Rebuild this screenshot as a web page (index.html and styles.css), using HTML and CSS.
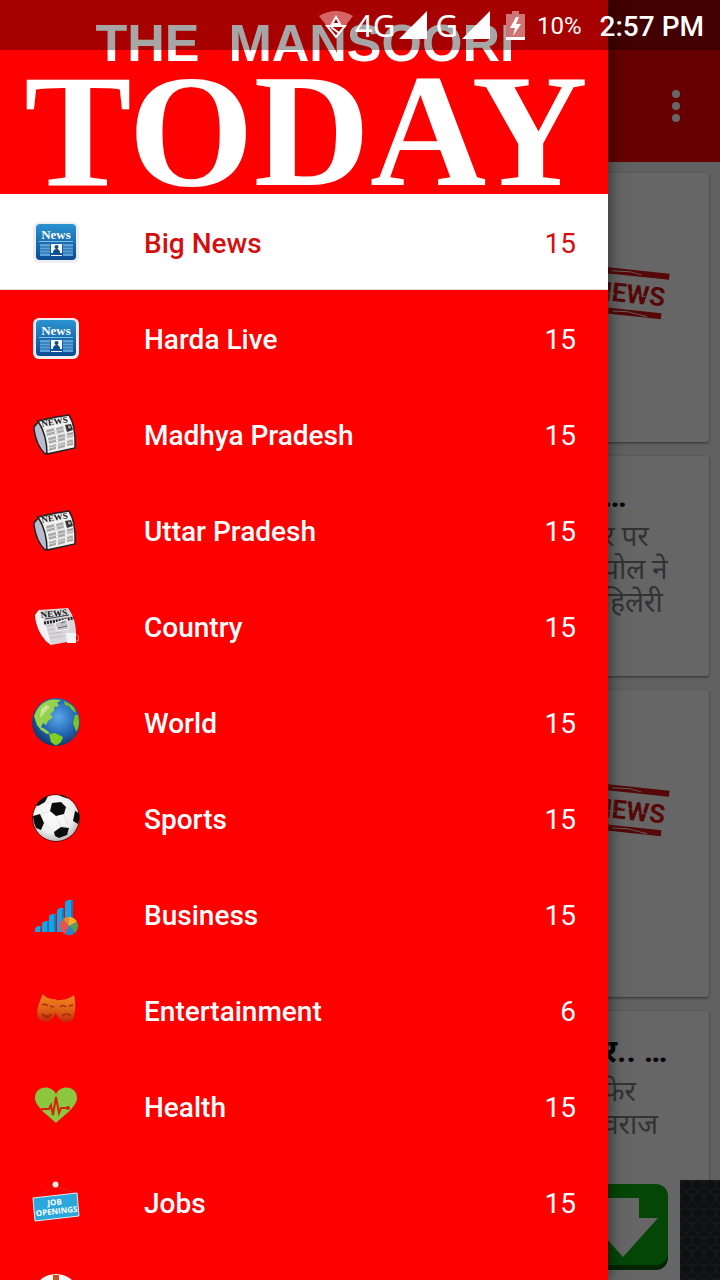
FILE: index.html
```html
<!DOCTYPE html>
<html lang="en">
<head>
<meta charset="utf-8">
<meta name="viewport" content="width=device-width, initial-scale=1">
<title>The Mansoori Today</title>
<link rel="stylesheet" href="styles.css">
</head>
<body>
<svg class="defs" aria-hidden="true">
  <defs>
    <linearGradient id="blue" x1="0" y1="0" x2="0" y2="1"><stop offset="0" stop-color="#2a93d0"/><stop offset="1" stop-color="#0b4a94"/></linearGradient>
    <radialGradient id="sea" cx=".55" cy=".4" r=".6"><stop offset="0" stop-color="#5aa8e8"/><stop offset=".6" stop-color="#2467b4"/><stop offset="1" stop-color="#12396f"/></radialGradient>
    <radialGradient id="ballshade" cx=".45" cy=".4" r=".6"><stop offset="0" stop-color="#fff"/><stop offset=".7" stop-color="#eee"/><stop offset="1" stop-color="#bbb"/></radialGradient>
    <linearGradient id="mask" x1="0" y1="0" x2="0" y2="1"><stop offset="0" stop-color="#f08a1c"/><stop offset=".6" stop-color="#dc5d16"/><stop offset="1" stop-color="#c4260c"/></linearGradient>
    <clipPath id="globeclip"><circle cx="24" cy="24" r="23"/></clipPath>
    <pattern id="hex" width="12" height="14" patternUnits="userSpaceOnUse"><path d="M6 0L11 3V7L6 10L1 7V3Z M0 8L5 11V14H0Z M12 8L7 11V14H12Z" fill="#26282c"/></pattern>
    <symbol id="i-app" viewBox="0 0 48 48">
      <rect x="1" y="4" width="46" height="41" rx="6" fill="#eeeef2"/>
      <rect x="4" y="6" width="40" height="36" rx="4" fill="url(#blue)"/>
      <text x="24" y="21" text-anchor="middle" class="app-word">News</text>
      <path d="M7 23.500H41" stroke="#7fc0e8"/>
      <path d="M8 26H18V38H8ZM31 26H41V38H31Z" fill="#5ba3d6"/>
      <path d="M8 29H18M8 32H18M8 35H18M31 29H41M31 32H41M31 35H41" stroke="#2167a8"/>
      <path d="M19 26H30V35H19ZM19 37H30V38H19Z" fill="#fff"/>
      <circle cx="24.500" cy="29" r="2" fill="#114b86"/><path d="M21 35Q21 31 24.500 31Q28 31 28 35Z" fill="#114b86"/>
    </symbol>
    <symbol id="i-paper" viewBox="0 0 48 48">
      <path d="M7 11L2 17V19Q4 35 13 44L16 42L12 14Z" fill="#b9bcd0" stroke="#222" stroke-width="1.500"/>
      <path d="M6 11Q22 7 37 5Q44 16 43 38L15 44Q15 25 6 11Z" fill="#f1f1f1" stroke="#222" stroke-width="1.500"/>
      <text x="10" y="17" transform="rotate(-10 10 17)" class="paper-word">NEWS</text>
      <path d="M14 20L22 18L23 24L15 26ZM24 18L31 16L32 22L25 24ZM16 28L24 26L24 32L17 34ZM26 25L33 24L33 30L26 32ZM17 36L24 34V39L17 41ZM26 34L33 32V37L26 39ZM35 23L41 22V27L35 28ZM35 31L41 29V35L35 36Z" fill="#aaa"/>
      <path d="M14 23L32 19M16 31L41 25M17 38L41 32M16 26L33 22M17 34L41 29" stroke="#ddd"/>
      <path d="M33 15L39 14L41 20L35 22Z" fill="#333"/><circle cx="37.500" cy="17" r="1.500" fill="#aaa"/>
    </symbol>
  </defs>
</svg>

<div class="screen">
  <div class="app">
    <header class="toolbar">
      <button class="more" type="button" aria-label="More options"><span></span><span></span><span></span></button>
    </header>
    <main class="feed" lang="hi">
      <article class="card card-photo">
        <svg class="stamp" viewBox="0 0 170 54" role="img" aria-label="Big News">
          <g transform="rotate(6 85 27)"><path d="M2-2H168V4H2ZM2 38H164V44H2Z" fill="#d61414"/><path d="M110 1L128 0L140 2M115 41L130 40L150 43" stroke="#eee" fill="none"/>
          <text x="166" y="31" text-anchor="end" class="stamp-word">BIG NEWS</text><path d="M108 24H120M122 20H134M138 23H148M151 25H162" stroke="#fff" stroke-dasharray="3 2"/></g>
        </svg>
      </article>
      <article class="card card-story">
        <h2>…</h2>
        <p>र पर<br>पोल ने<br>हिलेरी</p>
      </article>
      <article class="card card-photo card-tall">
        <svg class="stamp" viewBox="0 0 170 54" role="img" aria-label="Big News">
          <g transform="rotate(6 85 27)"><path d="M2-2H168V4H2ZM2 38H164V44H2Z" fill="#d61414"/><path d="M110 1L128 0L140 2M115 41L130 40L150 43" stroke="#eee" fill="none"/>
          <text x="166" y="31" text-anchor="end" class="stamp-word">BIG NEWS</text><path d="M108 24H120M122 20H134M138 23H148M151 25H162" stroke="#fff" stroke-dasharray="3 2"/></g>
        </svg>
      </article>
      <article class="card card-story">
        <h2>र.. …</h2>
        <p>फेर<br>वराज</p>
      </article>
    </main>
    <aside class="ad">
      <button class="download" type="button" aria-label="Download">
        <svg viewBox="0 0 88 88"><rect y="2" width="88" height="84" rx="12" fill="#085c08"/><rect width="88" height="81" rx="12" fill="#0cb010"/><path d="M27 14H59V34H78L43 73L8 34H27Z" fill="#fff"/></svg>
      </button>
      <svg class="mesh" aria-hidden="true"><rect width="100%" height="100%" fill="#3a3b3e"/><rect width="100%" height="100%" fill="url(#hex)"/></svg>
    </aside>
  </div>

  <div class="scrim"></div>

  <div class="drawer">
    <header class="brand"><span class="brand-top">THE&nbsp; MANSOORI</span><span class="brand-main">TODAY</span></header>
    <nav aria-label="Categories">
      <a class="item active" href="#big-news"><svg class="icon"><use href="#i-app"/></svg><span class="label">Big News</span><span class="count">15</span></a>
      <a class="item" href="#harda-live"><svg class="icon"><use href="#i-app"/></svg><span class="label">Harda Live</span><span class="count">15</span></a>
      <a class="item" href="#madhya-pradesh"><svg class="icon"><use href="#i-paper"/></svg><span class="label">Madhya Pradesh</span><span class="count">15</span></a>
      <a class="item" href="#uttar-pradesh"><svg class="icon"><use href="#i-paper"/></svg><span class="label">Uttar Pradesh</span><span class="count">15</span></a>
      <a class="item" href="#country">
        <svg class="icon" viewBox="0 0 48 48"><path d="M7 8L3 13Q4 28 14 39L19 43L35 40V34L44 31Q44 17 36 6Q22 7 7 8Z" fill="#d9d6d9"/><path d="M7 8L3 13Q4 28 14 39L19 43Q15 24 7 8Z" fill="#f4f2f4"/><text x="9" y="16" transform="rotate(-6 9 16)" class="paper-word">NEWS</text><path d="M12 21L42 16" stroke="#222" stroke-width="3" stroke-dasharray="2 1"/><path d="M13 17L37 13" stroke="#444"/><path d="M23 21L35 17L37 27L25 29Z" fill="#c5c5c9" stroke="#f4f4f4"/><path d="M26 26L35 24M29 21L33 20" stroke="#667"/><path d="M15 24L21 23M16 28L22 27M17 32L30 30M18 36L31 34" stroke="#bbb"/><path d="M34 31H44V41H35Z" fill="#eef6f6"/><path d="M44 33Q48 33 46 39H44" fill="none" stroke="#d88"/></svg>
        <span class="label">Country</span><span class="count">15</span></a>
      <a class="item" href="#world">
        <svg class="icon" viewBox="0 0 48 48"><circle cx="24" cy="24" r="24" fill="url(#sea)"/><g clip-path="url(#globeclip)"><path d="M2 18Q6 5 18 1L29 2L25 5L27 8L22 9L22 13L18 16L21 19L16 23L14 27L11 25L9 29L13 31L18 35L15 36L9 32L5 27Z" fill="#94d34b"/><path d="M17 36L23 35L31 39L29 44L24 48L19 44Z" fill="#82cf24"/><path d="M32 3L42 8L44 15L40 12L37 8L33 7ZM43 17L48 16V32L44 33L41 25Z" fill="#79c522"/><path d="M9 11L14 7L18 9L13 14L8 20Z" fill="#c6e693"/></g></svg>
        <span class="label">World</span><span class="count">15</span></a>
      <a class="item" href="#sports">
        <svg class="icon" viewBox="0 0 48 48"><circle cx="24" cy="24" r="23.500" fill="url(#ballshade)" stroke="#700"/><path d="M20 9L29 8L34 13L32 20L24 22L18 17ZM1 22L8 20L12 29L9 36L4 34Q1 28 1 22ZM22 38L29 33L37 34L35 41L27 44L23 42ZM43 17L47 19Q48 26 46 30L41 27ZM4 11Q9 4 16 2L13 8L6 12ZM26 1Q32 1 37 5L31 3Z" fill="#0c0c0c"/><path d="M20 9L13 8M34 13L42 17M18 17L8 20M12 29L22 38M32 20L37 34L41 27M24 22L29 33" stroke="#e4e4e4" fill="none"/></svg>
        <span class="label">Sports</span><span class="count">15</span></a>
      <a class="item" href="#business">
        <svg class="icon" viewBox="0 0 48 48"><path d="M3 38L6 36H9V42H3ZM10 33L13 31H17V42H10ZM17 26L20 24H24V42H17ZM25 20L28 18H32V42H25ZM33 12L36 10H41V42H33Z" fill="#1ba2e0"/><path d="M8 37L9 36V42H8ZM15 32L17 31V42H15ZM22 25L24 24V42H22ZM30 19L32 18V42H30ZM39 11L41 10V42H39Z" fill="#1679ba"/><path d="M37 36V27A9 9 0 0 1 45 32Z" fill="#f2b52c"/><path d="M37 36L45 32A9 9 0 0 1 43 43Z" fill="#4ba35c"/><path d="M37 36L43 43A9 9 0 0 1 33 44Z" fill="#2187cb"/><path d="M37 36L33 44A9 9 0 0 1 31 29Z" fill="#e55252"/><path d="M37 36L31 29A9 9 0 0 1 37 27Z" fill="#e88a35"/></svg>
        <span class="label">Business</span><span class="count">15</span></a>
      <a class="item" href="#entertainment">
        <svg class="icon" viewBox="0 0 48 48"><path d="M23 14Q35 15 42 9Q45 23 41 33Q35 39 28 34Q22 28 23 14Z" fill="url(#mask)"/><path d="M11 8Q15 14 24 13Q28 25 19 34Q11 38 6 32Q3 24 11 8Z" fill="url(#mask)"/><path d="M10 19Q13 17 16 20M18 20L22 21M28 21Q31 18 34 21M37 20L41 19M10 28Q15 32 20 28Q15 35 10 28M30 30Q35 26 39 30" fill="none" stroke="#ae2c0b" stroke-width="1.500"/></svg>
        <span class="label">Entertainment</span><span class="count">6</span></a>
      <a class="item" href="#health">
        <svg class="icon" viewBox="0 0 48 48"><path d="M24 41C18 35 3 25 3 16C3 4 19 2 24 12C29 2 45 4 45 16C45 25 30 35 24 41Z" fill="#8dc63f"/><path d="M9 27H17L19 23L21 33L24 15L27 31L29 26H36" fill="none" stroke="#d22408" stroke-width="2"/><circle cx="36" cy="26" r="2" fill="#d22408"/></svg>
        <span class="label">Health</span><span class="count">15</span></a>
      <a class="item" href="#jobs">
        <svg class="icon" viewBox="0 0 48 48"><path d="M4 20L23 8L43 15" fill="none" stroke="#d32626"/><circle cx="23.500" cy="6.500" r="3" fill="#f5e9e9"/><path d="M1 20L45 15L47 38L3 43Z" fill="#2aa8dc" stroke="#d9eef5"/><g transform="rotate(-6 24 28)"><text x="23" y="27" text-anchor="middle" class="job-word">JOB</text><text x="24" y="36" text-anchor="middle" class="job-word">OPENINGS</text></g></svg>
        <span class="label">Jobs</span><span class="count">15</span></a>
      <a class="item" href="#more" aria-label="More">
        <svg class="icon" viewBox="0 0 48 48"><circle cx="24" cy="24" r="24" fill="#f5f5f5"/><path d="M21 1H27V6L24 9L21 6Z" fill="#c8501c"/></svg></a>
    </nav>
  </div>

  <div class="status">
    <svg class="wifi" viewBox="0 0 34 28"><path d="M0 5Q17-5 34 5L17 27Z" fill="#d66464"/><path d="M17 6L21 13H13ZM8 15H26L17 26Z" fill="#a00" stroke="#fff" stroke-width="2"/><path d="M12 16L20 22" stroke="#fff" stroke-width="2"/></svg>
    <span class="net">4G</span>
    <svg class="signal" viewBox="0 0 28 28"><path d="M28 0V28H0Z" fill="#fff"/></svg>
    <span class="net">G</span>
    <svg class="signal" viewBox="0 0 28 28"><path d="M28 0V28H0Z" fill="#fff"/></svg>
    <svg class="battery" viewBox="0 0 19 29"><path d="M6 0H13V3H19V26H0V3H6Z" fill="#cf7474"/><path d="M0 26H19V29H0Z" fill="#fff"/><path d="M10 6L4 17H9L7 25L15 13H10L13 6Z" fill="#fff"/></svg>
    <span class="percent">10%</span>
    <time class="clock">2:57 PM</time>
  </div>
</div>
</body>
</html>
```
FILE: styles.css
```css
* { box-sizing: border-box; }
body { margin: 0; font-family: Roboto, "Noto Sans", sans-serif; }
.defs { position: absolute; width: 0; height: 0; }
.screen { position: relative; height: 100vh; overflow: hidden; background: #f3f3f3; }

/* Page behind the drawer */
.app { display: flex; flex-direction: column; height: 100%; }
.toolbar { flex: none; display: flex; justify-content: flex-end; padding: 50px 28px 0 0; height: 162px; background: #f00; }
.more { display: flex; flex-direction: column; align-items: center; justify-content: center; gap: 4px; width: 32px; padding: 0; border: 0; background: none; }
.more span { width: 8px; height: 8px; border-radius: 50%; background: #fff; }
.feed { flex: 1; min-height: 0; overflow: hidden; display: flex; flex-direction: column; gap: 14px; padding: 11px 11px 0; }
.card { flex: none; background: #fff; border-radius: 3px; box-shadow: 0 1px 3px rgba(0, 0, 0, .5); }
.card-photo { height: 269px; padding: 94px 40px 0; text-align: right; }
.card-tall { height: 307px; }
.stamp { width: 170px; height: 54px; overflow: visible; }
.stamp-word { font: bold 26px "Liberation Sans Narrow", Roboto, sans-serif; fill: #d61414; }
.card-story { height: 220px; padding: 20px 0 0 592px; color: #808080; }
.card-story h2 { margin: 0 0 4px; font-size: 32px; line-height: 40px; color: #111; white-space: nowrap; }
.card-story p { margin: 0; font-size: 28px; line-height: 33px; white-space: nowrap; }
.ad { flex: none; display: flex; height: 100px; background: #fff; }
.download { align-self: flex-start; margin-left: auto; margin-right: 12px; padding: 4px 0 0; border: 0; background: none; }
.download svg { display: block; width: 88px; height: 88px; }
.mesh { width: 40px; height: 100px; }
.scrim { position: absolute; inset: 0; background: rgba(0, 0, 0, .6); }

/* Navigation drawer */
.drawer { position: absolute; top: 0; bottom: 0; left: 0; width: calc(100% - 112px); overflow: hidden; background: #f00; box-shadow: 0 0 16px rgba(0, 0, 0, .6); }
.brand { display: flex; flex-direction: column; align-items: center; height: 194px; padding-top: 18px; color: #fff; white-space: nowrap; }
.brand-top { padding-left: 2px; font: bold 52px/50px "Liberation Sans", Arial, sans-serif; }
.brand-main { padding-left: 4px; font: bold 161px/126px "Liberation Serif", "Times New Roman", serif; }
.item { display: flex; align-items: center; height: 96px; padding: 0 32px; color: #fff; font-size: 28px; text-decoration: none; }
.active { background: #fff; color: #d50f0f; box-shadow: inset 0 -1px #e8dede; }
.icon { flex: none; width: 48px; height: 48px; margin-right: 64px; }
.label { flex: 1; padding-top: 2px; font-weight: 500; }
.count { padding-top: 2px; }
.app-word { font: bold 13px "Liberation Serif", serif; fill: #fff; }
.paper-word { font: bold 9px "Liberation Serif", serif; fill: #111; }
.job-word { font: bold 8px "Open Sans", sans-serif; fill: #fff; }

/* System status bar */
.status { position: absolute; top: 0; left: 0; right: 0; height: 50px; display: flex; align-items: center; justify-content: flex-end; padding-right: 16px; color: #fff; background: rgba(0, 0, 0, .35); }
.wifi { width: 34px; height: 28px; margin-right: 2px; }
.net { font: 31px/40px "Noto Sans", sans-serif; }
.signal { width: 28px; height: 28px; margin: 0 8px 0 4px; }
.battery { width: 19px; height: 29px; margin: 0 12px 0 8px; }
.percent { padding-top: 2px; font-size: 24px; margin-right: 18px; }
.clock { padding-top: 2px; font-size: 28px; font-weight: 500; }
```
